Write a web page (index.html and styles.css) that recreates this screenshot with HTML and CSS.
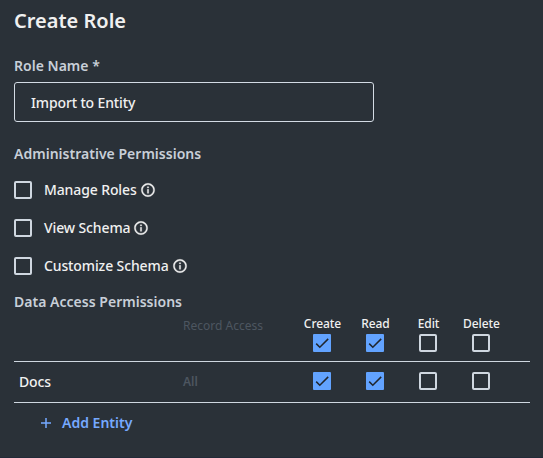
FILE: index.html
```html
<!DOCTYPE html>
<html lang="en">
<head>
<meta charset="utf-8">
<title>Create Role</title>
<link rel="stylesheet" href="styles.css">
</head>
<body>
<svg width="0" height="0" class="defs" aria-hidden="true">
  <symbol id="info" viewBox="0 0 24 24"><path d="M11 7h2v2h-2zm0 4h2v6h-2zm1-9C6.480 2 2 6.480 2 12s4.480 10 10 10 10-4.480 10-10S17.520 2 12 2zm0 18c-4.410 0-8-3.590-8-8s3.590-8 8-8 8 3.590 8 8-3.590 8-8 8z"/></symbol>
  <symbol id="check" viewBox="0 0 18 18"><path d="M3.200 9.600L6.800 13.200L15.200 4.900" fill="none" stroke="currentColor" stroke-width="1.500"/></symbol>
</svg>
<main class="panel">
  <h1 class="title">Create Role</h1>
  <label class="label" for="role-name">Role Name *</label>
  <input class="field" id="role-name" value="Import to Entity">
  <h2 class="label admin">Administrative Permissions</h2>
  <div class="option"><span class="box"></span><span class="name">Manage Roles</span><svg class="info"><use href="#info"/></svg></div>
  <div class="option"><span class="box"></span><span class="name">View Schema</span><svg class="info"><use href="#info"/></svg></div>
  <div class="option"><span class="box"></span><span class="name">Customize Schema</span><svg class="info"><use href="#info"/></svg></div>
  <h2 class="label data">Data Access Permissions</h2>
  <div class="row head">
    <span></span>
    <span class="access">Record Access</span>
    <div class="cell"><span class="col">Create</span><span class="box on"><svg><use href="#check"/></svg></span></div>
    <div class="cell"><span class="col">Read</span><span class="box on"><svg><use href="#check"/></svg></span></div>
    <div class="cell"><span class="col">Edit</span><span class="box"></span></div>
    <div class="cell"><span class="col">Delete</span><span class="box"></span></div>
  </div>
  <div class="row entity">
    <span class="docs">Docs</span>
    <span class="all">All</span>
    <div class="cell"><span class="box on"><svg><use href="#check"/></svg></span></div>
    <div class="cell"><span class="box on"><svg><use href="#check"/></svg></span></div>
    <div class="cell"><span class="box"></span></div>
    <div class="cell"><span class="box"></span></div>
  </div>
  <div class="add"><svg class="plus" viewBox="0 0 10 10"><path d="M5 0V10M0 5H10" stroke="currentColor" stroke-width="1.500"/></svg><span class="add-text">Add Entity</span></div>
</main>
</body>
</html>
```
FILE: styles.css
```css
* { box-sizing: border-box; }
body {
  margin: 0;
  background: #2a3138;
  color: #f0f0f0;
  font-family: "Noto Sans", sans-serif;
  font-size: 14px;
  line-height: 20px;
  overflow: hidden;
}
.defs { display: none; }
.panel { display: flex; flex-direction: column; width: 543px; height: 458px; padding: 7px 0 0 14px; border-bottom: 1px solid #222a38; }
.title { margin: 0; font-size: 20px; font-weight: 600; line-height: 28px; }
.label { margin: 21px 0 0; height: 20px; font-size: 14px; font-weight: 600; letter-spacing: 0.02px; color: #c8cfd8; white-space: nowrap; }
.field {
  width: 360px; height: 40px; margin: 6px 0 0; padding: 1px 16px 0;
  border: 1px solid #d3dbe4; border-radius: 3px; background: transparent;
  color: #f0f0f0; font: 500 14px/20px "Noto Sans", sans-serif; letter-spacing: -0.14px; outline: 0;
}
.admin { margin: 22px 0 7px; }
.option { display: flex; align-items: center; height: 38px; }
.box { display: block; flex: none; width: 18px; height: 18px; border: 2px solid #cfd7e0; border-radius: 2px; }
.box.on { border: 0; border-radius: 1px; background: #62a3ff; color: #20262d; }
.box svg { display: block; width: 18px; height: 18px; }
.name { margin-left: 12px; font-weight: 500; letter-spacing: -0.12px; }
.info { width: 16px; height: 16px; margin-left: 3px; fill: #f0f0f0; stroke: #f0f0f0; stroke-width: 0.5px; }
.data { margin-top: 7px; }
.row { display: grid; grid-template-columns: 169px 112px repeat(4, 53px); width: 516px; border-bottom: 1px solid #cfd7e0; }
.head { height: 50px; padding-top: 4px; }
.entity { height: 41px; align-items: center; }
.entity .cell { padding-bottom: 2px; }
.cell { display: flex; flex-direction: column; align-items: center; }
.col { height: 16px; margin-bottom: 2px; padding-left: 2px; font-size: 12px; font-weight: 500; line-height: 16px; letter-spacing: -0.06px; }
.access { font-size: 12px; color: #4d5660; }
.docs { padding-left: 5px; font-weight: 500; letter-spacing: -0.12px; }
.all { font-size: 12px; font-weight: 600; color: #4d5660; }
.add { display: flex; align-items: center; height: 40px; padding-left: 27px; color: #76a9ff; }
.plus { width: 10px; height: 10px; }
.add-text { margin-left: 11px; font-weight: 600; }
```
